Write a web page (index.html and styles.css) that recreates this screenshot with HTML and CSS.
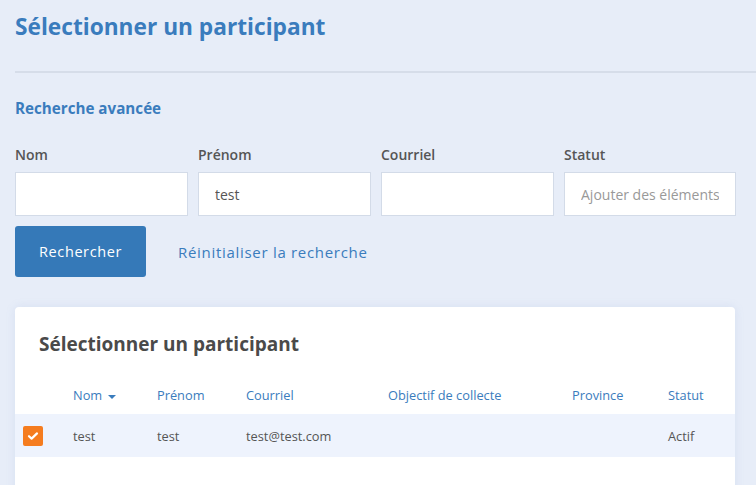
FILE: index.html
```html
<!DOCTYPE html>
<html lang="fr">
<head>
<meta charset="utf-8">
<link rel="stylesheet" href="styles.css">
</head>
<body>
<div class="page">
  <h1 class="title">Sélectionner un participant</h1>
  <hr class="sep">
  <h2 class="subtitle">Recherche avancée</h2>
  <div class="filters">
    <label class="field"><span class="lbl">Nom</span><input class="inp" type="text"></label>
    <label class="field"><span class="lbl">Prénom</span><input class="inp" type="text" value="test"></label>
    <label class="field"><span class="lbl">Courriel</span><input class="inp" type="text"></label>
    <label class="field"><span class="lbl">Statut</span><input class="inp" type="text" placeholder="Ajouter des éléments"></label>
  </div>
  <div class="actions">
    <button class="btn">Rechercher</button>
    <a class="reset">Réinitialiser la recherche</a>
  </div>
  <div class="card">
    <h3 class="card-title">Sélectionner un participant</h3>
    <table class="tbl">
      <colgroup>
        <col style="width:46px"><col style="width:84px"><col style="width:89px"><col style="width:142px"><col style="width:184px"><col style="width:96px"><col>
      </colgroup>
      <thead>
        <tr>
          <th></th>
          <th>Nom <span class="caret"></span></th>
          <th>Prénom</th>
          <th>Courriel</th>
          <th>Objectif de collecte</th>
          <th>Province</th>
          <th>Statut</th>
        </tr>
      </thead>
      <tbody>
        <tr class="sel">
          <td class="chk-cell"><span class="chk"><svg width="12" height="10" viewBox="0 0 12 10"><path d="M2 5.2 L4.6 7.6 L10 2.4" fill="none" stroke="#fff" stroke-width="2.2" stroke-linecap="round" stroke-linejoin="round"/></svg></span></td>
          <td>test</td>
          <td>test</td>
          <td>test@test.com</td>
          <td></td>
          <td></td>
          <td>Actif</td>
        </tr>
      </tbody>
    </table>
  </div>
</div>
</body>
</html>
```

FILE: styles.css
```css
* { box-sizing: border-box; }
html, body { margin: 0; padding: 0; }
body {
  background: #e7edf8;
  font-family: "Open Sans", "Noto Sans", sans-serif;
  color: #555;
  overflow: hidden;
  width: 756px;
  height: 485px;
}
.page { padding: 12px 0 0 15px; width: 771px; }
.title {
  margin: 0;
  font-size: 22.7px;
  font-weight: 700;
  color: #3a7cbd;
  line-height: 30px;
}
.sep {
  margin: 29px 0 0 0;
  border: 0;
  height: 2px;
  background: #d6dde9;
}
.subtitle {
  margin: 24px 0 0 0;
  font-size: 15.2px;
  font-weight: 700;
  color: #3a7cbd;
  line-height: 22px;
}
.filters {
  display: grid;
  grid-template-columns: 173px 173px 173px 172px;
  column-gap: 10px;
  margin-top: 26px;
}
.field { display: flex; flex-direction: column; }
.lbl {
  font-size: 14px;
  font-weight: 600;
  color: #555;
  line-height: 20px;
  margin-bottom: 7px;
}
.inp {
  height: 44px;
  border: 1px solid #d3dbe8;
  background: #fff;
  font-family: inherit;
  font-size: 14px;
  color: #555;
  padding: 0 16px;
  outline: none;
  width: 100%;
}
.inp::placeholder { color: #999; }
.actions {
  display: flex;
  align-items: center;
  margin-top: 10px;
  gap: 32px;
}
.btn {
  width: 131px;
  height: 51px;
  background: #3579b8;
  color: #fff;
  border: 0;
  border-radius: 3px;
  font-family: inherit;
  font-size: 14.5px;
  letter-spacing: 0.6px;
}
.reset {
  color: #3a7cbd;
  font-size: 15px;
  letter-spacing: 0.7px;
}
.card {
  margin-top: 30px;
  width: 720px;
  background: #fff;
  border-radius: 4px;
  box-shadow: 0 0 10px rgba(120, 150, 210, 0.15);
  padding-top: 24px;
  height: 200px;
}
.card-title {
  margin: 0 0 0 24px;
  font-size: 19px;
  font-weight: 700;
  color: #4a4a4a;
  line-height: 26px;
}
.tbl {
  margin-top: 25px;
  width: 100%;
  border-collapse: collapse;
  table-layout: fixed;
}
.tbl th {
  text-align: left;
  font-weight: 400;
  font-size: 12.8px;
  color: #3a7cbd;
  padding: 0 0 10px 12px;
  height: 32px;
  vertical-align: bottom;
  white-space: nowrap;
}
.caret {
  display: inline-block;
  width: 0; height: 0;
  border-left: 4px solid transparent;
  border-right: 4px solid transparent;
  border-top: 4px solid #3a7cbd;
  vertical-align: middle;
  margin-left: 2px;
}
.tbl td {
  font-size: 12.8px;
  color: #555;
  padding: 0 0 0 12px;
  height: 43px;
  white-space: nowrap;
}
.sel td { background: #eef3fd; }
.sel { box-shadow: inset 0 6px 6px -4px rgba(120, 150, 210, 0.25); }
.tbl td.chk-cell { padding-left: 8px; }
.chk {
  display: flex;
  align-items: center;
  justify-content: center;
  width: 20px; height: 20px;
  background: #f57c1f;
  border-radius: 2px;
}
```
